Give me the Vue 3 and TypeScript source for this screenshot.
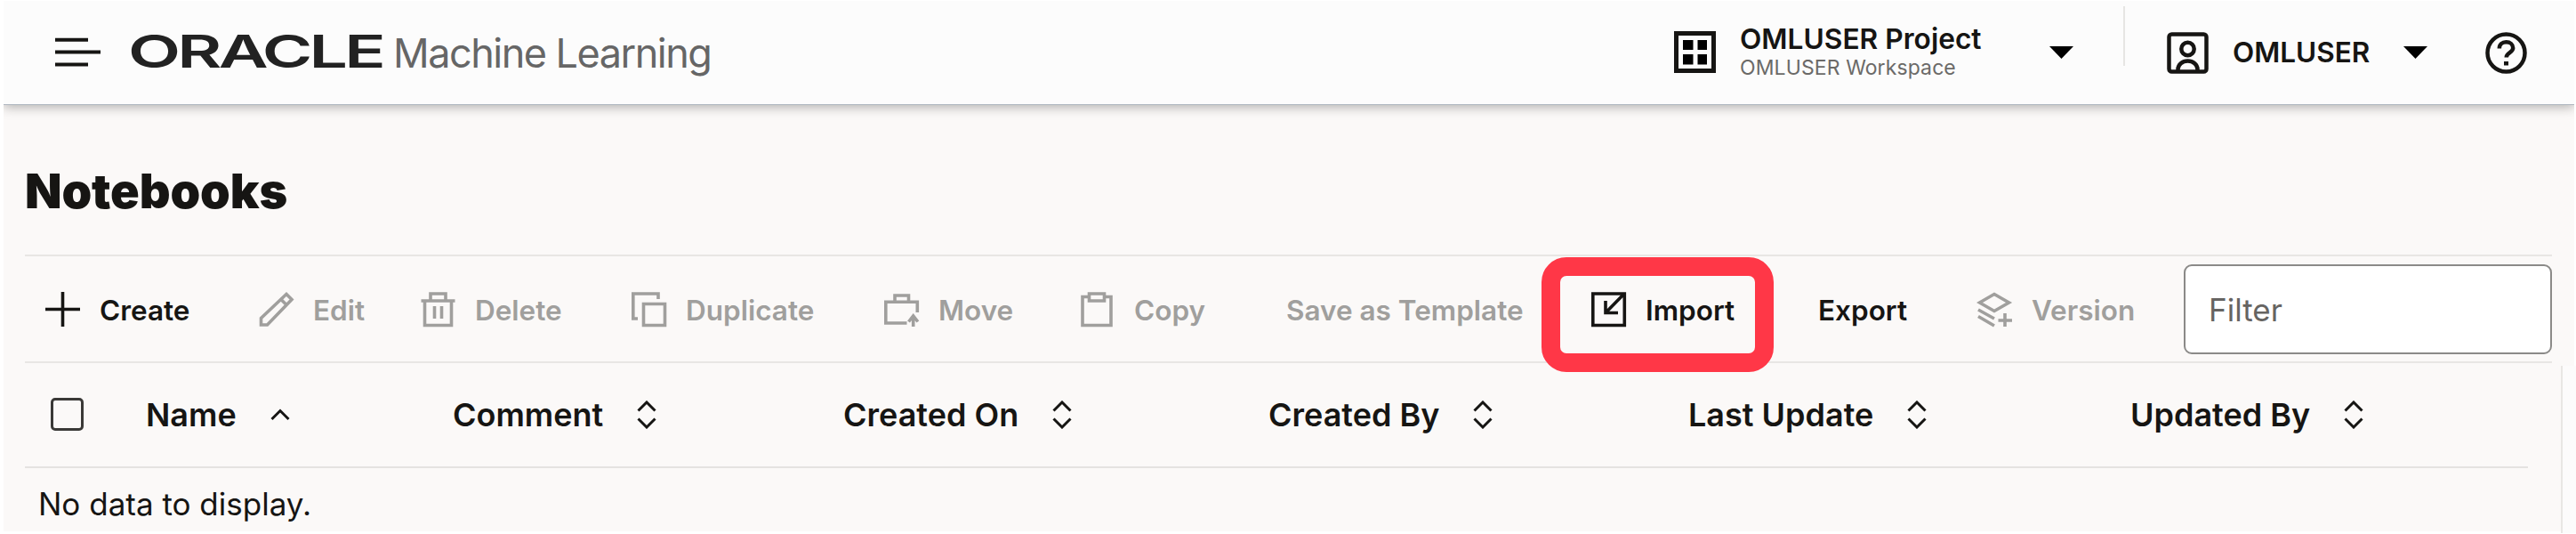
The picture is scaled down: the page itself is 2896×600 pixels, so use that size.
<script setup lang="ts">
interface Action {
  id: string
  label: string
  enabled: boolean
  icon?: string
}

const actions: Action[] = [
  { id: 'create', label: 'Create', enabled: true, icon: 'M20.5 1v39M1 20.5h39' },
  {
    id: 'edit',
    label: 'Edit',
    enabled: false,
    icon: 'M3.500 38v-7.500L32 3.500l6 6L10.500 38zM26 9.500l6 6',
  },
  {
    id: 'delete',
    label: 'Delete',
    enabled: false,
    icon: 'M1.500 11h38M12 11V3h17v8M5.500 11v27.500h30V11M16.500 17v14M24.500 17v14',
  },
  {
    id: 'duplicate',
    label: 'Duplicate',
    enabled: false,
    icon: 'M31 9V3H2.800v28H8M14.500 14.500h24v24h-24z',
  },
  {
    id: 'move',
    label: 'Move',
    enabled: false,
    icon: 'M26.500 36H2.800V12.200h35.500V24M13 12V5h15.500v7M33.700 40V29M28.500 34.500l5.200-6.500 5.200 6.500',
  },
  {
    id: 'copy',
    label: 'Copy',
    enabled: false,
    icon: 'M11.500 6.500H4v32h32v-32h-7.500M11.500 3h17v8h-17z',
  },
  { id: 'template', label: 'Save as Template', enabled: false },
  {
    id: 'import',
    label: 'Import',
    enabled: true,
    icon: 'M2.800 3h35.500v35.500H2.800zM37.500 3.500L18 23.500M17 11v13.500h14',
  },
  { id: 'export', label: 'Export', enabled: true },
  {
    id: 'version',
    label: 'Version',
    enabled: false,
    icon: 'M20 3.500L36.500 13 20 22.500 3.500 13zM2 21l18 10M2 28.500L20 39M32 25v15M24.500 33h15.500',
  },
]

const columns: { label: string; sorted: boolean }[] = [
  { label: 'Name', sorted: true },
  { label: 'Comment', sorted: false },
  { label: 'Created On', sorted: false },
  { label: 'Created By', sorted: false },
  { label: 'Last Update', sorted: false },
  { label: 'Updated By', sorted: false },
]
</script>

<template>
  <div class="window">
    <header class="topbar">
      <svg class="menu" viewBox="0 0 51 34" width="51" height="34">
        <path d="M0 2.800h37M0 16.500h51M0 30.500h37" />
      </svg>
      <svg class="wordmark" viewBox="0 0 284 60" width="284" height="60">
        <text x="-3" y="47" textLength="286" lengthAdjust="spacingAndGlyphs">ORACLE</text>
      </svg>
      <span class="product">Machine Learning</span>
      <div class="project">
        <svg class="project-icon" viewBox="0 0 47 47" width="47" height="47">
          <path class="frame" d="M2.500 2.500h42v42h-42z" />
          <path class="tiles" d="M10 10h11.500v11H10zM26.500 10H37v11H26.500zM10 26h11.500v11.500H10zM26.500 26H37v11.500H26.500z" />
        </svg>
        <div class="project-text">
          <span class="project-name">OMLUSER Project</span>
          <span class="workspace">OMLUSER Workspace</span>
        </div>
        <svg class="caret" viewBox="0 0 27 14" width="27" height="14"><path d="M0 0h27L13.500 14z" /></svg>
      </div>
      <div class="account">
        <svg class="line-icon" viewBox="0 0 47 47" width="47" height="47">
          <rect x="2.500" y="2.500" width="42" height="42" rx="3" />
          <circle cx="23.500" cy="19" r="7.200" />
          <path d="M12.500 44v-2a11 9.500 0 0 1 22 0v2" />
        </svg>
        <span class="user">OMLUSER</span>
        <svg class="caret" viewBox="0 0 27 14" width="27" height="14"><path d="M0 0h27L13.500 14z" /></svg>
      </div>
      <svg class="line-icon help" viewBox="0 0 47 47" width="47" height="47">
        <circle cx="23.500" cy="23.500" r="21" />
        <path class="mark" d="M15.800 18.500c0-4.500 3.200-7.200 7.700-7.200s7.700 2.800 7.700 6.700c0 5.200-7.500 5-7.500 10.500" />
        <path class="dot" d="M21 33h5v4.500h-5z" />
      </svg>
    </header>

    <main class="content">
      <h1>Notebooks</h1>

      <div class="toolbar">
        <button v-for="a in actions" :key="a.id" type="button" :class="['action', a.id, { disabled: !a.enabled }]">
          <svg v-if="a.icon" viewBox="0 0 41 41" width="41" height="41"><path :d="a.icon" /></svg>
          <span>{{ a.label }}</span>
        </button>
        <div class="filter">Filter</div>
      </div>

      <div class="table">
        <div class="head">
          <div class="check"><span class="box"></span></div>
          <div v-for="c in columns" :key="c.label" class="column">
            <span>{{ c.label }}</span>
            <svg viewBox="0 0 22 32" width="22" height="32">
              <path v-if="c.sorted" d="M1.500 21L11 11.500 20.500 21" />
              <path v-else d="M1.500 11.500L11 2l9.500 9.500M1.500 20.500L11 30l9.500-9.500" />
            </svg>
          </div>
        </div>
        <div class="empty">No data to display.</div>
      </div>
    </main>
  </div>
</template>

<style>
body {
  margin: 0;
  background: #fff;
}
</style>

<style scoped>
.window {
  box-sizing: border-box;
  width: 2896px;
  height: 600px;
  padding: 1px 2px 3px 4px;
  overflow: hidden;
  background: #fff;
  color: #161513;
  font-family: Inter, 'Liberation Sans', sans-serif;
}
.topbar {
  position: relative;
  display: flex;
  align-items: center;
  box-sizing: border-box;
  height: 117px;
  padding: 0 53px 0 58px;
  background: #fcfcfc;
  border-bottom: 1px solid #b0b7c0;
  box-shadow: 0 2px 12px rgba(22, 21, 19, 0.34);
  clip-path: inset(0 0 -20px 0);
}
.menu {
  margin-right: 34px;
  fill: none;
  stroke: #161513;
  stroke-width: 4;
}
.wordmark {
  overflow: visible;
}
.wordmark text {
  font: 600 51px Inter, sans-serif;
  letter-spacing: -2.500px;
  fill: #222;
}
.product {
  margin-left: 11px;
  padding-top: 1px;
  color: #666;
  font-size: 45px;
  letter-spacing: -1.500px;
  white-space: nowrap;
}
.project {
  display: flex;
  align-items: center;
  box-sizing: border-box;
  width: 507px;
  height: 67px;
  margin: -37px 0 0 auto;
  padding-top: 36px;
  border-right: 2px solid #e6e5e3;
}
.project-text {
  display: flex;
  flex-direction: column;
  width: 348px;
  margin-left: 27px;
  padding-bottom: 1px;
  white-space: nowrap;
}
.project-name {
  font-size: 31.700px;
  font-weight: 600;
  line-height: 36px;
}
.workspace {
  color: #6b6a68;
  font-size: 23px;
  letter-spacing: 0.100px;
  line-height: 28px;
}
.project-icon .frame {
  fill: none;
  stroke: #161513;
  stroke-width: 5;
}
.account {
  display: flex;
  align-items: center;
  width: 358px;
  margin-left: 47px;
}
.user {
  width: 192px;
  margin-left: 27px;
  padding-bottom: 2px;
  font-size: 31.500px;
  font-weight: 600;
}
.line-icon {
  fill: none;
  stroke: #161513;
  stroke-width: 4.500;
}
.line-icon .dot {
  fill: #161513;
  stroke: none;
}
.content {
  height: 479px;
  box-sizing: border-box;
  padding: 67px 0 0 24px;
  background: #fbf9f8;
}
h1 {
  margin: 0;
  height: 101px;
  font-size: 54px;
  font-weight: 900;
  letter-spacing: -0.100px;
  line-height: 59px;
}
.toolbar {
  display: grid;
  grid-template-columns: 240px 182px 237px 284px 220px 232px 343px 255px 179px 233px 414px;
  align-items: center;
  box-sizing: border-box;
  width: 2841px;
  height: 122px;
  padding-left: 22px;
  border-top: 2px solid #e8e6e4;
  border-bottom: 2px solid #e8e6e4;
}
.action {
  position: relative;
  display: flex;
  align-items: center;
  gap: 21px;
  padding: 0;
  border: 0;
  background: none;
  color: #161513;
  font: 600 31.500px/40px Inter, sans-serif;
  white-space: nowrap;
}
.action span {
  padding-top: 3px;
}
.action svg {
  fill: none;
  stroke: currentColor;
  stroke-width: 3.600;
}
.disabled {
  color: #a09f9d;
}
.template,
.export {
  padding-left: 1px;
}
.import::after {
  content: '';
  position: absolute;
  left: -55px;
  top: -37px;
  box-sizing: border-box;
  width: 261px;
  height: 129px;
  border: 21px solid #ff3747;
  border-radius: 28px;
}
.filter {
  box-sizing: border-box;
  height: 101px;
  padding-left: 26px;
  border: 2px solid #8b8a88;
  border-radius: 9px;
  background: #fff;
  color: #666462;
  font-size: 35px;
  line-height: 98px;
}
.table {
  box-sizing: border-box;
  width: 2870px;
  height: 188px;
  margin-top: 3px;
  background: linear-gradient(90deg, transparent 2851px, #e8e6e4 2851px 2853px, #fcfbfb 2853px);
}
.head {
  display: grid;
  grid-template-columns: 136px 345px 439px 478px 472px 497px 447px;
  align-items: center;
  box-sizing: border-box;
  width: 2814px;
  height: 115px;
  padding-bottom: 4px;
  border-bottom: 2px solid #e5e3e1;
}
.check {
  padding-left: 29px;
}
.box {
  display: block;
  box-sizing: border-box;
  width: 37px;
  height: 37px;
  border: 3px solid #3a3937;
  border-radius: 5px;
}
.column {
  display: flex;
  align-items: center;
  gap: 38px;
  font-size: 36px;
  font-weight: 600;
  white-space: nowrap;
}
.column svg {
  fill: none;
  stroke: #161513;
  stroke-width: 3;
}
.empty {
  padding-left: 15px;
  font-size: 35px;
  line-height: 80px;
}
</style>
